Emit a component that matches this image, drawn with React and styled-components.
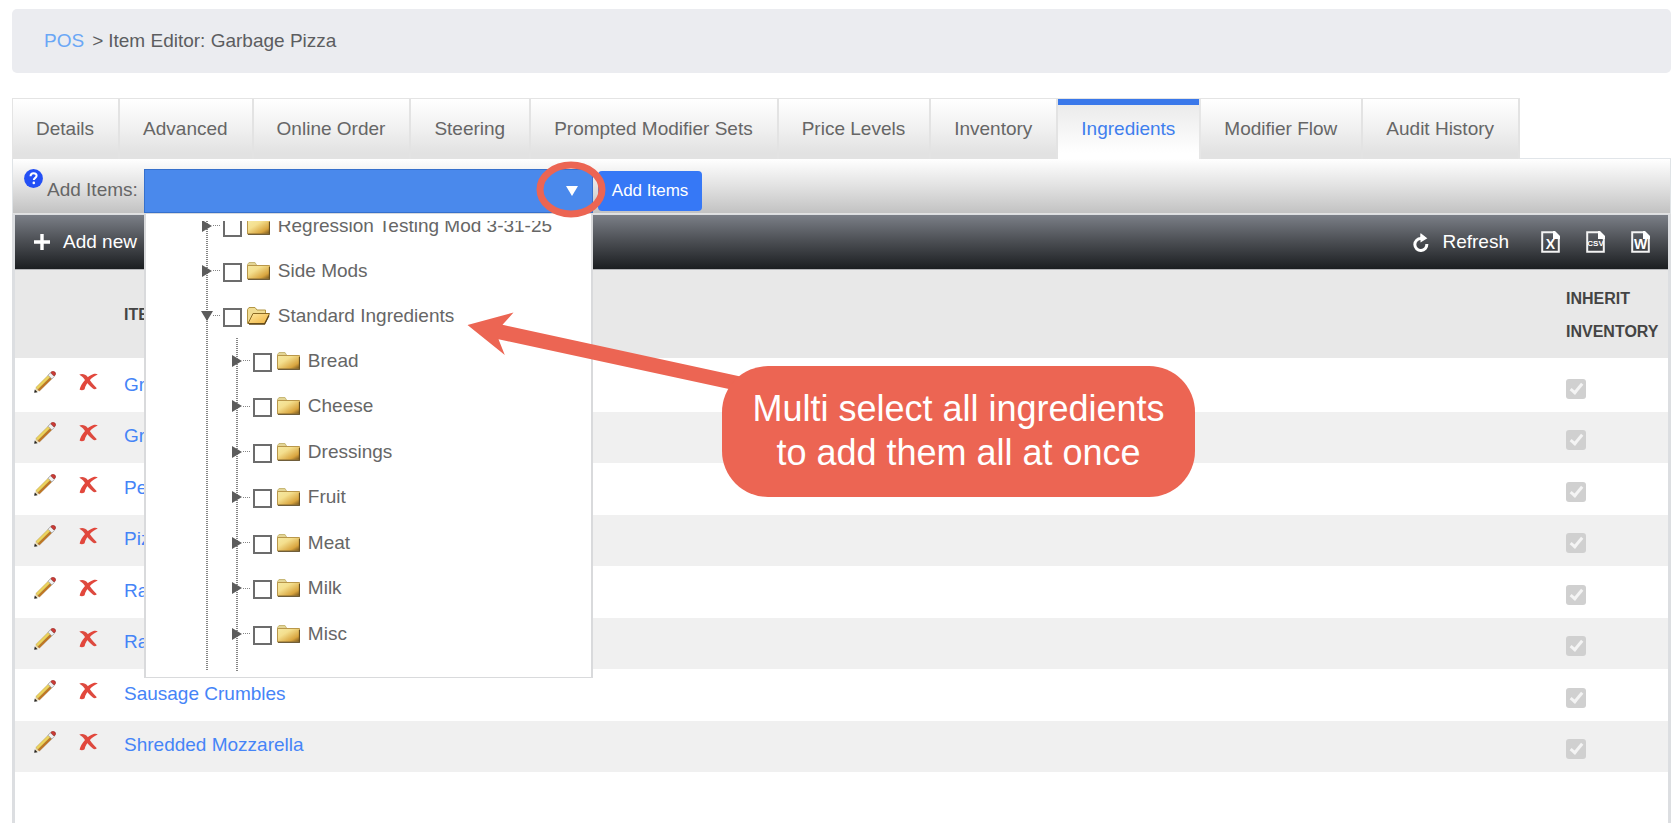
import React, { useState } from "react";
import styled, { createGlobalStyle, css } from "styled-components";

const GlobalStyle = createGlobalStyle`
  *, *::before, *::after { box-sizing: border-box; }
  body {
    margin: 0;
    background: #fff;
    color: #666;
    font: 19px/24px "Liberation Sans", Arial, sans-serif;
  }
  button, input { font: inherit; color: inherit; margin: 0; }
  ul { list-style: none; margin: 0; padding: 0; }
  svg { display: block; flex: none; }
`;

const Page = styled.div`
  position: relative;
  display: flex;
  flex-direction: column;
  min-height: 100vh;
  padding: 9px 9px 0 12px;
  overflow: hidden;
`;

const Breadcrumb = styled.nav`
  display: flex;
  align-items: center;
  gap: 8px;
  height: 64px;
  padding: 0 32px;
  margin-bottom: 25px;
  border-radius: 5px;
  background: #ebecf0;
  color: #5c5d60;

  a { color: #6aa7f6; text-decoration: none; }
  span { display: flex; gap: 5px; }
`;

const Tabs = styled.div`
  display: flex;
  align-self: flex-start;
  border: 1px solid #e4e4e4;
  border-width: 1px 0 0 1px;
`;

const Tab = styled.button`
  height: 60px;
  padding: 0 24px 0 23px;
  border: 0;
  border-right: 2px solid #e3e3e3;
  background: linear-gradient(#fff, #f2f2f2 45%, #e2e2e2 90%);
  white-space: nowrap;
  cursor: pointer;
  ${(p) =>
    p.$active &&
    css`
      color: #3f7fee;
      border-right-color: #e6e6e6;
      background: linear-gradient(#3a78ea 6px, #ebebeb 6px, #fff 90%);
    `}
`;

const AddBar = styled.div`
  position: relative;
  z-index: 2;
  display: flex;
  align-items: flex-start;
  height: 55px;
  padding: 10px 10px 0 11px;
  border: 1px solid #dfe3e6;
  border-bottom-color: #e2e2e2;
  border-top: 0;
  background: linear-gradient(#fff, #e2e2e2 50%, #c2c2c2);
`;

const TabRule = styled.div`
  flex: 1;
  align-self: flex-end;
  border-bottom: 1px solid #e1e5e9;
`;

const TabStrip = styled.div`
  display: flex;
`;

const HelpButton = styled.button`
  display: block;
  padding: 0;
  margin-right: 4px;
  border: 0;
  background: none;
`;

const FieldLabel = styled.label`
  margin-right: 6px;
  line-height: 42px;
  white-space: nowrap;
`;

const Combo = styled.div`
  position: relative;
  display: flex;
  width: 449px;
  height: 44px;
  margin-right: 5px;
  border: 1px solid #3670cc;
  background: #4a89ec;
`;

const ComboInput = styled.input`
  flex: 1;
  min-width: 0;
  padding: 0 8px;
  border: 0;
  background: none;
  color: #fff;
  outline: none;
`;

const ComboArrow = styled.button`
  display: grid;
  place-items: center;
  width: 40px;
  padding: 0;
  border: 0;
  background: none;
`;

const AddButton = styled.button`
  height: 40px;
  padding: 0 14px;
  margin-top: 2px;
  border: 0;
  border-radius: 4px;
  background: #3678f6;
  color: #fff;
  font-size: 17px;
`;

const DropPanel = styled.div`
  position: absolute;
  top: 43px;
  left: -1px;
  width: 449px;
  height: 465px;
  padding: 7px 0;
  border: 1px solid #d9dadc;
  border-left-width: 2px;
  border-right-width: 2px;
  background: #fff;
`;

const TreeViewport = styled.div`
  height: 450px;
  overflow: hidden;
`;

const Branch = styled.ul`
  margin-left: ${(p) => (p.$nested ? "30px" : "56px")};
  background: repeating-linear-gradient(#858585 0 1px, #fff 1px 2px) 4px 0 / 2px 100% no-repeat;
  ${(p) => (p.$nested ? "padding-bottom: 15px;" : "margin-top: -18px;")}
`;

const Node = styled.div`
  display: flex;
  align-items: center;
  height: 45px;

  ${Branch} ${Branch} > li:nth-child(even) > & { height: 46px; }

  label {
    display: flex;
    align-items: center;
    gap: 8px;
    white-space: nowrap;
  }
`;

const Toggle = styled.button`
  display: block;
  padding: 0;
  border: 0;
  background: none;
`;

const Twig = styled.span`
  width: 8px;
  height: 1px;
  margin-right: 3px;
  background: repeating-linear-gradient(90deg, #fff 0 1px, #858585 1px 2px);
`;

const NodeCheck = styled.input`
  appearance: none;
  position: relative;
  flex: none;
  width: 19px;
  height: 19px;
  && { margin: 3px 5px 0 0; }
  border: 2px solid #6c6c6c;
  background: #fff;

  &:checked::after {
    content: "";
    position: absolute;
    inset: 2px;
    background: #4a89ec;
  }
`;

const Grid = styled.section`
  flex: 1;
  border: solid #dcdee1;
  border-width: 1px 3px 0 3px;
`;

const CommandBar = styled.div`
  display: flex;
  align-items: center;
  justify-content: space-between;
  height: 54px;
  padding: 0 18px 0 19px;
  background: linear-gradient(#7b7f87, #4a4d52 50%, #1b1e21);
  color: #fff;
`;

const Commands = styled.div`
  display: flex;
  align-items: center;
  gap: 26px;
`;

const Command = styled.button`
  display: flex;
  align-items: center;
  gap: 13px;
  padding: 0;
  border: 0;
  background: none;
  white-space: nowrap;
  && { margin-right: ${(p) => (p.$spaced ? "6px" : "0")}; }
`;

const Table = styled.table`
  width: 100%;
  border-collapse: collapse;
  table-layout: fixed;

  th {
    height: 88px;
    padding: 2px 0 0;
    border-top: 1px solid #b4b5b8;
    background: #e8e8e8;
    color: #444;
    font-size: 16px;
    line-height: 33px;
    text-align: left;
  }
`;

const Row = styled.tr`
  td { height: 52px; padding: 0 0 2px; }
  &:nth-child(even) td { height: 51px; background: #f0f0f0; }
  &:first-child td { height: 54px; padding-top: 2px; }
  a { color: #4584f7; text-decoration: none; }
`;

const RowAction = styled.button`
  display: block;
  padding: 0;
  border: 0;
  background: none;
  && { margin: 0 0 6px 19px; }
`;

const InheritCheck = styled.input`
  appearance: none;
  position: relative;
  display: block;
  width: 20px;
  height: 20px;
  && { margin-top: 8px; }
  border-radius: 3px;
  background: #d0d0d0;

  &:checked::after {
    content: "";
    position: absolute;
    left: 7px;
    top: 2px;
    width: 7px;
    height: 13px;
    border: solid #f4f4f4;
    border-width: 0 3px 3px 0;
    transform: rotate(40deg);
  }
`;

const Ring = styled.svg`
  position: absolute;
  z-index: 3;
  left: 536px;
  top: 161px;
`;

const Pointer = styled.svg`
  position: absolute;
  z-index: 3;
  left: 467px;
  top: 311px;
`;

const Callout = styled.aside`
  position: absolute;
  z-index: 4;
  left: 722px;
  top: 366px;
  width: 473px;
  padding: 21px 0 22px;
  border-radius: 46px;
  background: #ec6553;
  color: #fff;
  font-size: 36px;
  line-height: 44px;
  text-align: center;
`;

const HelpIcon = () => (
  <svg width="19" height="19" viewBox="0 0 19 19">
    <circle cx="9.500" cy="9.500" r="9.400" fill="#2450f5" />
    <path d="M6.500 7.200c.1-2 1.400-2.900 3.100-2.900 1.800 0 3 1 3 2.500 0 2.100-2.800 2.100-2.800 4.200" fill="none" stroke="#fff" strokeWidth="2" />
    <circle cx="9.800" cy="13.900" r="1.300" fill="#fff" />
  </svg>
);

const DownTriangle = () => (
  <svg width="12" height="10" viewBox="0 0 12 10"><path d="M0 0h12L6 10z" fill="#fff" /></svg>
);

const NodeTriangle = ({ open }) => (
  <svg width="10" height="12" viewBox="0 0 10 12" overflow="visible">
    <path d={open ? "M-1 1h12L5 11z" : "M0 0l10 6L0 12z"} fill="#5c5c5c" />
  </svg>
);

const FolderIcon = ({ open }) => (
  <svg width="23" height="18" viewBox="0 0 23 18">
    <defs>
      <linearGradient id="folderFace" x1="0" y1="0" x2="1" y2="1">
        <stop offset="0" stopColor="#f5e9a4" />
        <stop offset=".35" stopColor="#f4df8e" />
        <stop offset=".75" stopColor="#d9a53f" />
        <stop offset="1" stopColor="#70501a" />
      </linearGradient>
      <linearGradient id="flapFace" x1="0" y1="0" x2="1" y2="1">
        <stop offset="0" stopColor="#ffe9a0" />
        <stop offset="1" stopColor="#efb23e" />
      </linearGradient>
    </defs>
    {open ? (
      <>
        <path d="M.5 16.500V2.500L2 .5h6l2 2.500h8.500v4" fill="#f0dc93" stroke="#b39645" />
        <path d="M1 16.500L6 6.500h16.500L18 16.500z" fill="url(#flapFace)" stroke="#8a6a25" />
        <path d="M2 17h15.500L22 8.500" fill="none" stroke="#5e4517" strokeWidth="1.300" />
      </>
    ) : (
      <>
        <path d="M.5 5V2.500L2 .5h6L9.500 3v2" fill="#e3d596" stroke="#c8b877" />
        <path d="M.5 3.500h22v13.500H.5z" fill="url(#folderFace)" stroke="#b9974a" />
        <path d="M1 17.300h21.500V5" fill="none" stroke="#4c3917" strokeWidth="1.200" strokeOpacity=".75" />
      </>
    )}
  </svg>
);

const PlusIcon = () => (
  <svg width="16" height="16" viewBox="0 0 16 16">
    <path d="M8 0v16M0 8h16" stroke="#fff" strokeWidth="3.400" />
  </svg>
);

const RefreshIcon = () => (
  <svg width="16" height="19" viewBox="0 0 16 19">
    <path d="M8 5.500A6 6 0 1 0 13.800 11" fill="none" stroke="#fff" strokeWidth="3" />
    <path d="M7.500 0v5.500H14.500z" fill="#fff" />
    <path d="M7.500 1l6.500 4.500L7.500 9.500z" fill="#fff" />
  </svg>
);

const FileIcon = ({ mark, size, y }) => (
  <svg width="19" height="22" viewBox="0 0 19 22">
    <path d="M1.200 1.200h12l4.600 4.600v15H1.200z" fill="none" stroke="#f3f3f3" strokeWidth="2" />
    <path d="M12 0h2l5 5v3h-7z" fill="#fff" />
    <text x="9.500" y={y} fill="#fff" fontSize={size} fontWeight="bold" textAnchor="middle">{mark}</text>
  </svg>
);

const PencilIcon = () => (
  <svg width="22" height="22" viewBox="0 0 22 22">
    <path d="M.5 21.500l1.300-5 3.600 3.600z" fill="#ead9b0" />
    <path d="M.2 21.800l.6-3.400 2.800 2.800z" fill="#222" />
    <path d="M1.800 16.500L14.200 4.200l2.200 2.200L4 18.700z" fill="#ecd35c" stroke="#a9893a" strokeWidth=".4" />
    <path d="M4 18.700L16.400 6.400l1.500 1.400L5.400 20.100z" fill="#c5761c" stroke="#77430f" strokeWidth=".4" />
    <path d="M14 4.200l2.500-2.500 3.800 3.800-2.500 2.500z" fill="#f1f1f1" stroke="#9a9a9a" strokeWidth=".8" />
    <path d="M16.800 1.600c1.200-1.600 2.800-1.800 4-.6s1 2.800-.6 4z" fill="#cc3a35" stroke="#8e2522" strokeWidth=".6" />
  </svg>
);

const DeleteIcon = () => (
  <svg width="19" height="18" viewBox="0 0 19 18">
    <path d="M.3 1.600C3 .6 6.500 1 8.500 3.800c2.500 3.600 5.300 7.600 9.300 11.400-1.200 1.300-2.800 1.200-3.900.4C10.500 13 7 8.500 4.500 5 3.300 3.500 2 3 .3 1.600z" fill="#dd4a3f" />
    <path d="M18.800 1.400C13.500 3.500 7 9.500 5.600 16.200c-1.400 1.200-3.600 1.200-5 .4C2 10.500 8.500 2.800 14.500 1c1.700-.5 3-.3 4.300.4z" fill="#e2473c" />
  </svg>
);

const TABS = [
  "Details", "Advanced", "Online Order", "Steering", "Prompted Modifier Sets",
  "Price Levels", "Inventory", "Ingredients", "Modifier Flow", "Audit History",
];

const TREE = [
  { name: "Regression Testing Mod 3-31-25" },
  { name: "Side Mods" },
  {
    name: "Standard Ingredients",
    children: ["Bread", "Cheese", "Dressings", "Fruit", "Meat", "Milk", "Misc"].map((name) => ({ name })),
  },
];

const ITEMS = [
  "Green Peppers", "Ground Beef", "Pepperoni", "Pizza Sauce",
  "Raw Mushrooms", "Raw Onions", "Sausage Crumbles", "Shredded Mozzarella",
];

function Tree({ nodes, nested }) {
  return (
    <Branch $nested={nested}>
      {nodes.map(({ name, children }) => {
        const id = `node-${name.replace(/\W+/g, "-")}`;
        return (
          <li key={name}>
            <Node>
              <Toggle type="button" aria-label={`Toggle ${name}`} aria-expanded={!!children}>
                <NodeTriangle open={!!children} />
              </Toggle>
              <Twig />
              <NodeCheck type="checkbox" id={id} />
              <label htmlFor={id}>
                <FolderIcon open={!!children} />
                {name}
              </label>
            </Node>
            {children && <Tree nodes={children} nested />}
          </li>
        );
      })}
    </Branch>
  );
}

export default function App() {
  const [tab, setTab] = useState("Ingredients");
  return (
    <>
      <GlobalStyle />
      <Page>
        <Breadcrumb aria-label="Breadcrumb">
          <a href="#pos">POS</a>
          <span><span>&gt;</span><span>Item Editor: Garbage Pizza</span></span>
        </Breadcrumb>

        <TabStrip>
          <Tabs role="tablist">
            {TABS.map((name) => (
              <Tab key={name} role="tab" aria-selected={tab === name} $active={tab === name} onClick={() => setTab(name)}>
                {name}
              </Tab>
            ))}
          </Tabs>
          <TabRule />
        </TabStrip>

        <AddBar>
          <HelpButton type="button" aria-label="Help"><HelpIcon /></HelpButton>
          <FieldLabel htmlFor="add-items">Add Items:</FieldLabel>
          <Combo>
            <ComboInput id="add-items" role="combobox" aria-expanded="true" aria-controls="items-tree" readOnly />
            <ComboArrow type="button" aria-label="Open item list"><DownTriangle /></ComboArrow>
            <DropPanel id="items-tree">
              <TreeViewport><Tree nodes={TREE} /></TreeViewport>
            </DropPanel>
          </Combo>
          <AddButton type="button">Add Items</AddButton>
        </AddBar>

        <Grid>
          <CommandBar>
            <Command type="button"><PlusIcon />Add new</Command>
            <Commands>
              <Command type="button" $spaced><RefreshIcon />Refresh</Command>
              <Command type="button" aria-label="Export to Excel"><FileIcon mark="X" size={14} y={18} /></Command>
              <Command type="button" aria-label="Export to CSV"><FileIcon mark="CSV" size={8} y={15} /></Command>
              <Command type="button" aria-label="Export to Word"><FileIcon mark="W" size={14} y={18} /></Command>
            </Commands>
          </CommandBar>
          <Table>
            <colgroup>
              <col style={{ width: 45 }} />
              <col style={{ width: 64 }} />
              <col />
              <col style={{ width: 102 }} />
            </colgroup>
            <thead>
              <tr>
                <th aria-label="Edit" />
                <th aria-label="Delete" />
                <th>ITEM</th>
                <th>INHERIT INVENTORY</th>
              </tr>
            </thead>
            <tbody>
              {ITEMS.map((name) => (
                <Row key={name}>
                  <td><RowAction type="button" aria-label={`Edit ${name}`}><PencilIcon /></RowAction></td>
                  <td><RowAction type="button" aria-label={`Delete ${name}`}><DeleteIcon /></RowAction></td>
                  <td><a href="#item">{name}</a></td>
                  <td><InheritCheck type="checkbox" defaultChecked disabled aria-label={`${name} inherits inventory`} /></td>
                </Row>
              ))}
            </tbody>
          </Table>
        </Grid>

        <Ring width="70" height="57" viewBox="0 0 70 57" aria-hidden="true">
          <ellipse cx="35" cy="28.500" rx="31" ry="24.500" fill="none" stroke="#ec6553" strokeWidth="7" />
        </Ring>
        <Pointer width="290" height="90" viewBox="467 311 290 90" aria-hidden="true">
          <path d="M467.500 325L513.500 312.500L502.500 324.800L745 377.500V392.500L498.500 339.300L504.800 355z" fill="#ec6553" />
        </Pointer>
        <Callout>Multi select all ingredients<br />to add them all at once</Callout>
      </Page>
    </>
  );
}
